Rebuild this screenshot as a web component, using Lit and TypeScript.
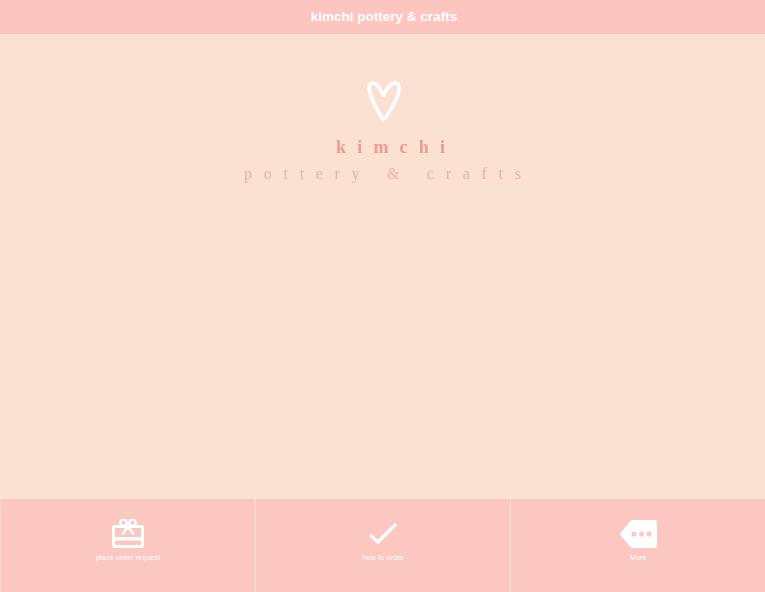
import { LitElement, html, css, svg } from "lit";
import { customElement } from "lit/decorators.js";

const gift = svg`<svg class="icon" viewBox="0 0 32 29" width="32" height="29" fill="none" stroke="#fff" stroke-width="3">
  <rect x="1.5" y="7.5" width="29" height="20" rx="1.5"/>
  <path d="M1.5 19.8H30.5" stroke-width="3.4"/>
  <circle cx="11.5" cy="3.7" r="3.2" stroke-width="2.6"/>
  <circle cx="20.5" cy="3.7" r="3.2" stroke-width="2.6"/>
  <path d="M16 7.5L11 14.5M16 7.5L21 14.5" stroke-width="2.8" stroke-linecap="round"/>
</svg>`;

const check = svg`<svg class="icon" viewBox="0 0 28 21" width="28" height="21" fill="none" stroke="#fff" stroke-width="3.3">
  <path d="M1 12L9 19L27 1"/>
</svg>`;

const more = svg`<svg class="icon" viewBox="0 0 37 28" width="37" height="28">
  <path fill="#fff" d="M11.5 0H34.5a2.5 2.5 0 0 1 2.5 2.5V25.5a2.5 2.5 0 0 1-2.5 2.5H11.5L0.6 15.2a2 2 0 0 1 0-2.4Z"/>
  <circle cx="14" cy="14" r="2.5" fill="#fdc7c1"/>
  <circle cx="21.5" cy="14" r="2.5" fill="#fdc7c1"/>
  <circle cx="29" cy="14" r="2.5" fill="#fdc7c1"/>
</svg>`;

const heart = svg`<svg class="heart" viewBox="0 0 34 40" width="34" height="40" fill="none" stroke="#fff" stroke-width="3.6" stroke-linecap="round" stroke-linejoin="round">
  <path d="M16.5 14.5C14 9 9.8 2 5.5 2C2.6 2 1.8 4.6 2.2 8C3 14 9 27 14 35.5C15.6 38.2 17.4 38.6 18.8 36.5C24 28.5 31 18 32 9.5C32.5 5 31.4 2 28 2C23.8 2 19 8.5 16.5 14.5Z"/>
</svg>`;

@customElement("app-root")
export class AppRoot extends LitElement {
  static styles = css`
    :host {
      display: flex;
      flex-direction: column;
      height: 592px;
      width: 100%;
      overflow: hidden;
      background: #fae1d2;
      font-family: "Liberation Sans", Arial, sans-serif;
    }
    .header {
      flex: none;
      height: 33px;
      border-bottom: 1px solid #f4c7bb;
      background: #fdc5c0;
      color: #fff;
      font-size: 13.5px;
      font-weight: 700;
      display: flex;
      align-items: center;
      justify-content: center;
      padding-left: 3px;
      box-sizing: content-box;
    }
    .main {
      flex: 1;
      display: flex;
      flex-direction: column;
      align-items: center;
      padding-top: 47px;
      box-sizing: border-box;
      min-height: 0;
    }
    .heart {
      display: block;
      filter: blur(0.4px);
      margin-left: 2px;
    }
    .logo1, .logo2 {
      font-family: "Liberation Serif", "Times New Roman", serif;
      white-space: nowrap;
      filter: blur(0.35px);
    }
    .logo1 {
      margin-top: 14px;
      font-size: 18px;
      line-height: 24px;
      font-weight: 700;
      color: #ef9a8e;
      letter-spacing: 11.2px;
      margin-right: -11.2px;
      margin-left: 16px;
    }
    .logo2 {
      margin-top: 3px;
      font-size: 16px;
      line-height: 24px;
      color: #f4aea2;
      letter-spacing: 11.7px;
      margin-right: -11.7px;
    }
    .tabs {
      flex: none;
      height: 93px;
      display: grid;
      grid-template-columns: repeat(3, 1fr);
      background: #fdc7c1;
    }
    .tab {
      border-left: 1px solid #fadbce;
      box-shadow: -1px 0 0 #fcd2c6;
      display: flex;
      flex-direction: column;
      align-items: center;
      color: #fff;
      font-size: 7.5px;
      line-height: 9px;
      padding-top: 19px;
      box-sizing: border-box;
    }
    .icon-box {
      height: 31px;
      display: flex;
      align-items: center;
      justify-content: center;
      margin-bottom: 4px;
    }
    .icon { display: block; }
    .label { filter: blur(0.3px); }
  `;

  render() {
    return html`
      <div class="header">kimchi pottery &amp; crafts</div>
      <div class="main">
        ${heart}
        <div class="logo1">kimchi</div>
        <div class="logo2">pottery &amp; crafts</div>
      </div>
      <div class="tabs">
        <div class="tab"><div class="icon-box">${gift}</div><div class="label">place order request</div></div>
        <div class="tab"><div class="icon-box">${check}</div><div class="label">how to order</div></div>
        <div class="tab"><div class="icon-box">${more}</div><div class="label">More</div></div>
      </div>
    `;
  }
}
